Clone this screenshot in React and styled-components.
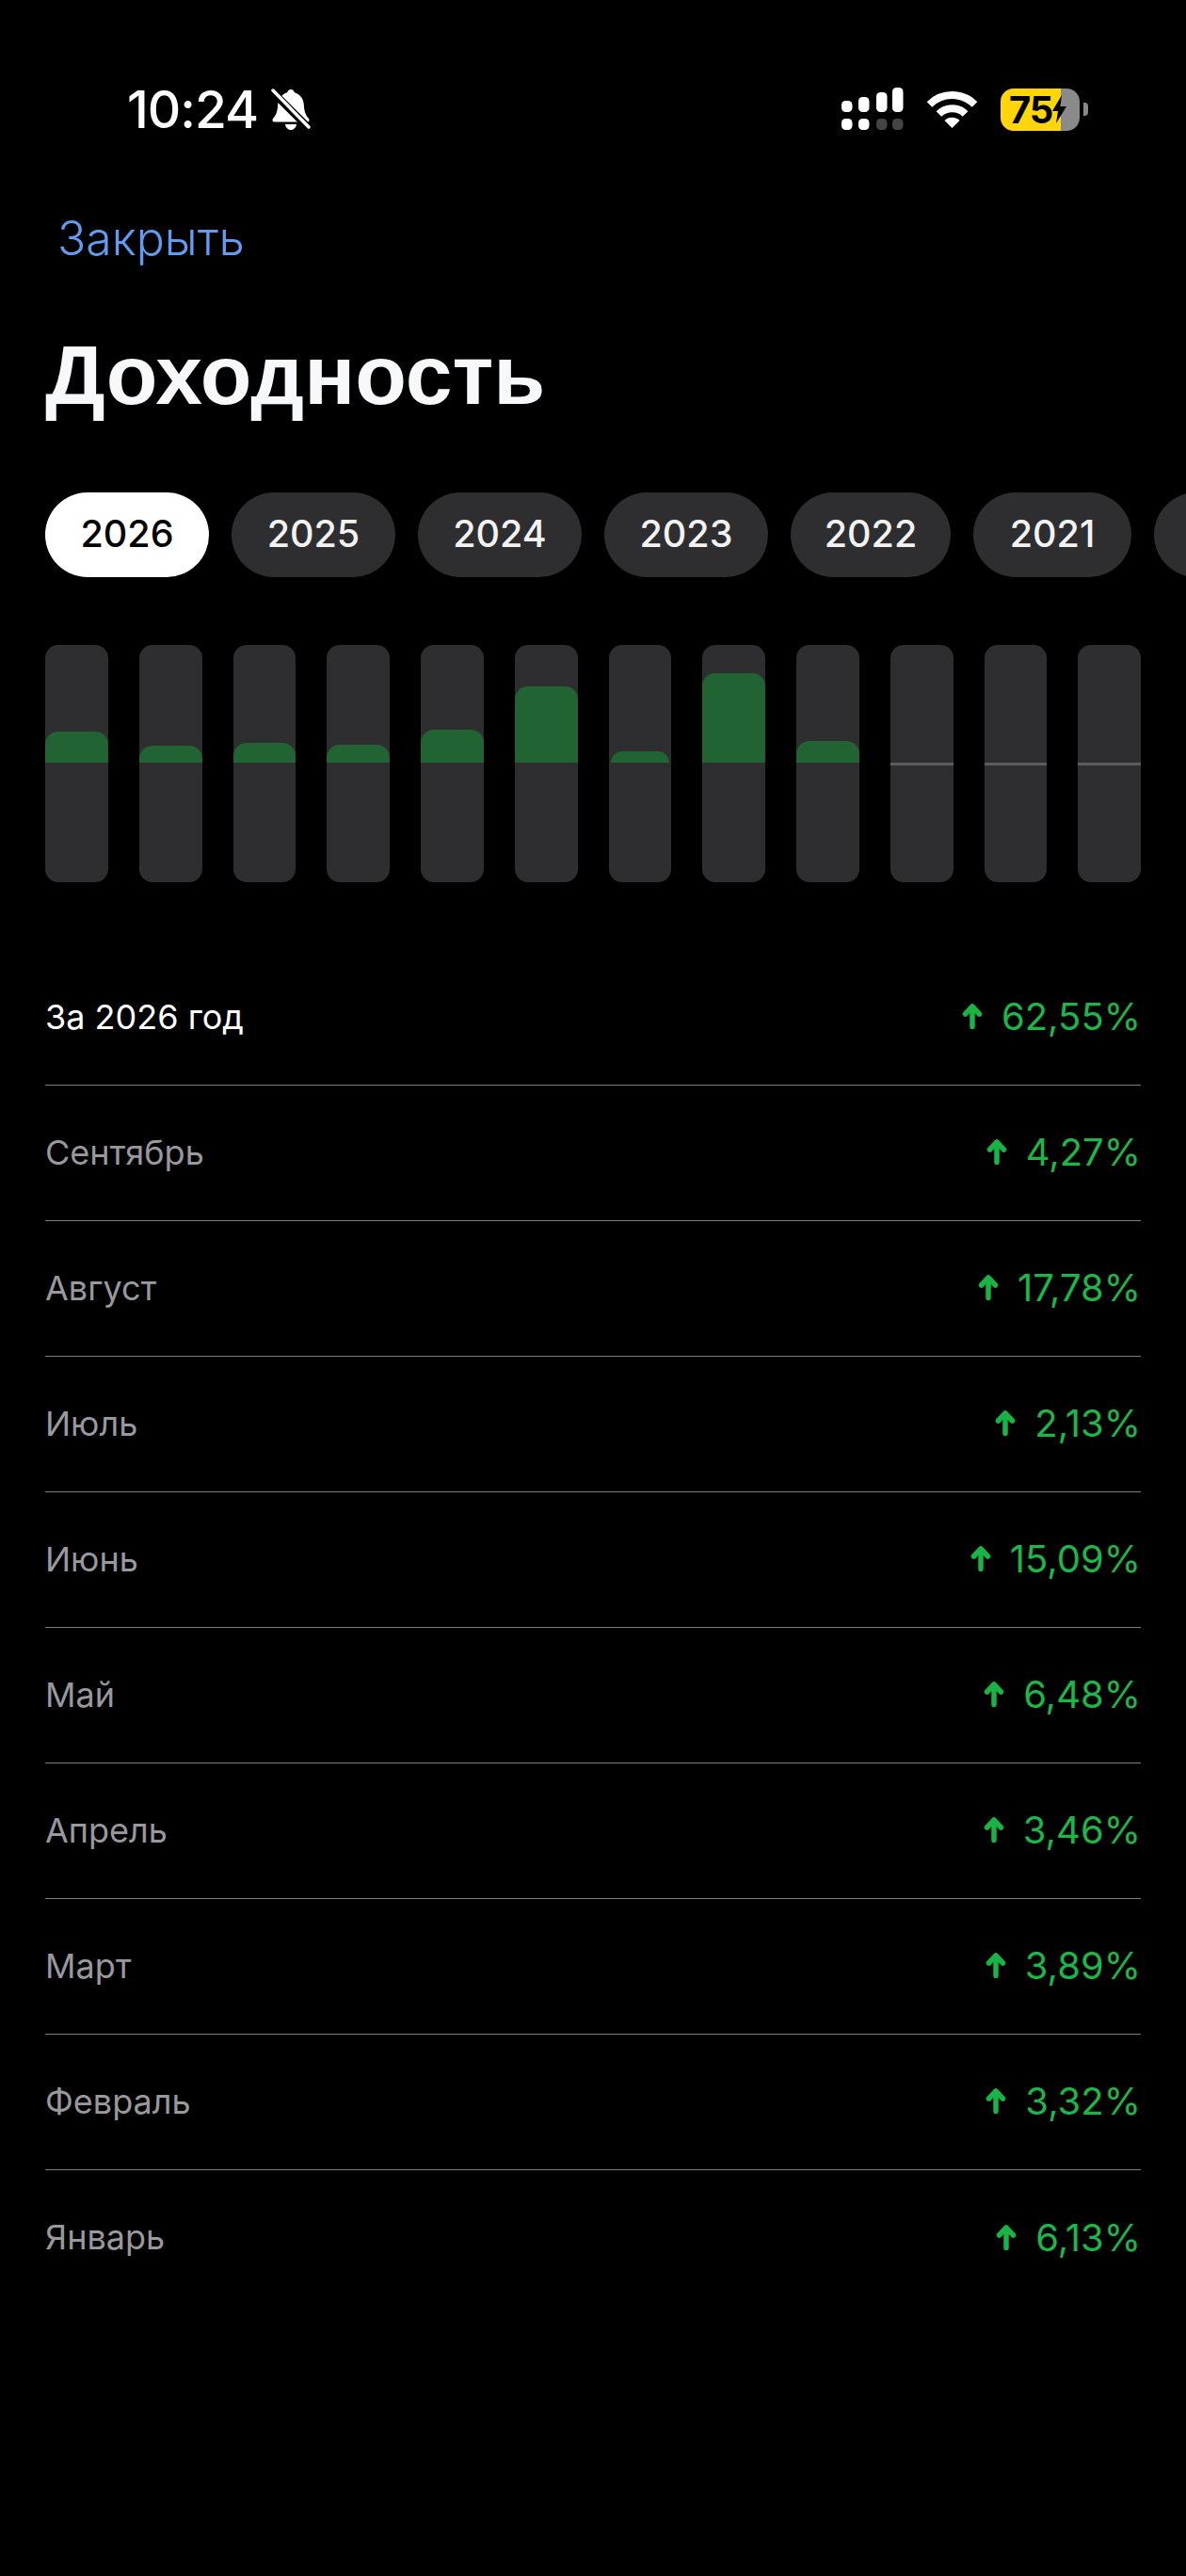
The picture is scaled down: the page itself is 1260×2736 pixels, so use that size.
import React from 'react';
import styled, { createGlobalStyle } from 'styled-components';

const years = [
  ['2026', 174],
  ['2025', 174],
  ['2024', 174],
  ['2023', 174],
  ['2022', 170],
  ['2021', 168],
];
const bars = [33, 18, 21, 19, 35, 81, 12, 95, 23, 0, 0, 0];
const months = [
  ['Сентябрь', '4,27%'],
  ['Август', '17,78%'],
  ['Июль', '2,13%'],
  ['Июнь', '15,09%'],
  ['Май', '6,48%'],
  ['Апрель', '3,46%'],
  ['Март', '3,89%'],
  ['Февраль', '3,32%'],
  ['Январь', '6,13%'],
];

const Global = createGlobalStyle`
  html, body { margin: 0; padding: 0; background: #000; }
`;

const Screen = styled.div`
  width: 1260px;
  height: 2736px;
  overflow: hidden;
  background: #000;
  color: #fff;
  font-family: Inter, "Liberation Sans", sans-serif;
`;

const StatusBar = styled.div`
  height: 92px;
  padding: 70px 104px 0 135px;
  display: flex;
  align-items: center;
  justify-content: space-between;
`;

const TimeGroup = styled.div`
  display: flex;
  align-items: center;
  gap: 14px;
`;

const Time = styled.span`
  font-size: 55px;
  font-weight: 500;
  letter-spacing: -1px;
`;

const Indicators = styled.div`
  display: flex;
  align-items: center;
  gap: 23px;
`;

const Battery = styled.div`
  display: flex;
  align-items: center;
  gap: 4px;
`;

const BatteryBody = styled.div`
  width: 84px;
  height: 45px;
  border-radius: 14px;
  background: linear-gradient(90deg, #ffd60a 0 64px, #8a8a8c 64px);
  display: flex;
  align-items: center;
  padding-left: 9px;
  box-sizing: border-box;
  color: #000;
  font-size: 40px;
  font-weight: 700;
  letter-spacing: -1px;
  svg {
    flex: none;
  }
`;

const BatteryNub = styled.div`
  width: 5px;
  height: 14px;
  border-radius: 0 4px 4px 0;
  background: #8a8a8c;
`;

const Close = styled.div`
  margin: 61px 0 0 61px;
  font-size: 50px;
  line-height: 60px;
  font-weight: 300;
  color: #5f9cf2;
`;

const Title = styled.h1`
  margin: 65px 0 0 48px;
  font-family: "Liberation Sans", Arial, sans-serif;
  font-size: 89.5px;
  line-height: 100px;
  font-weight: 700;
  color: #f7f8fa;
`;

const Years = styled.div`
  margin-top: 75px;
  padding-left: 48px;
  display: flex;
  gap: 24px;
`;

const YearPill = styled.div`
  flex: none;
  width: ${(p) => p.$width}px;
  height: 90px;
  padding-bottom: 2px;
  box-sizing: border-box;
  border-radius: 45px;
  display: flex;
  align-items: center;
  justify-content: center;
  font-size: 39.5px;
  font-weight: 500;
  background: ${(p) => (p.$active ? '#fff' : '#2e2e30')};
  color: ${(p) => (p.$active ? '#000' : '#f2f2f2')};
`;

const Chart = styled.div`
  margin: 72px 48px 0;
  display: grid;
  grid-template-columns: repeat(12, 1fr);
  column-gap: 33px;
`;

const Track = styled.div`
  height: 252px;
  border-radius: 14px;
  overflow: hidden;
  background: #2e2e30;
`;

const TrackTop = styled.div`
  height: 125px;
  display: flex;
  align-items: flex-end;
`;

const Fill = styled.div`
  flex: 1;
  margin: 0 ${(p) => (p.$small ? '2px' : '0')};
  border-radius: 14px 14px 0 0;
  background: #216332;
`;

const ZeroLine = styled.div`
  height: 3px;
  background: #5c5c5e;
`;

const List = styled.div`
  margin: 72px 48px 0;
`;

const Row = styled.div`
  height: 144px;
  padding-bottom: 2px;
  box-sizing: border-box;
  display: flex;
  align-items: center;
  justify-content: space-between;
  border-bottom: ${(p) => (p.$last ? 'none' : '1px solid #7d7d7d')};
`;

const Label = styled.span`
  font-size: 36px;
  color: ${(p) => (p.$total ? '#fff' : '#98989d')};
`;

const Change = styled.span`
  display: flex;
  align-items: center;
  gap: 20px;
  font-size: 40px;
  color: #1db64a;
`;

function BellSlash() {
  return (
    <svg width="42" height="45" viewBox="0 0 42 45">
      <path
        fill="#fff"
        d="M21 1c2 0 3.4 1.4 3.8 3.2C31 6 34.400 11 34.800 17c.4 7 1.700 11 5.200 15 1.200 1.500.4 3.500-1.700 3.500H3.700C1.600 35.500.8 33.500 2 32c3.500-4 4.800-8 5.200-15C7.600 11 11 6 17.200 4.200 17.600 2.400 19 1 21 1z"
      />
      <path fill="#fff" d="M15 38h12c-.5 3.500-3 6-6 6s-5.500-2.500-6-6z" />
      <path stroke="#000" strokeWidth="8" d="M0 2l42 42" />
      <path stroke="#fff" strokeWidth="3.500" strokeLinecap="round" d="M2 2l38 39" />
    </svg>
  );
}

function SignalIcon() {
  const cols = [
    [35, 36],
    [53, 32],
    [72, 27],
    [89, 22],
  ];
  return (
    <svg width="66" height="46" viewBox="35 22 66 46">
      {cols.map(([x, top], i) => (
        <g key={x}>
          <rect x={x} y={top} width="11.500" height={48 - top} rx="4.500" fill="#fff" />
          <rect x={x} y="55" width="11.500" height="12" rx="4.500" fill={i < 2 ? '#fff' : '#444446'} />
        </g>
      ))}
    </svg>
  );
}

function WifiIcon() {
  return (
    <svg width="57" height="42" viewBox="0 0 57 42">
      <g fill="none" stroke="#fff" strokeWidth="8">
        <path d="M4.500 16a34 34 0 0 1 48 0" />
        <path d="M14.400 26a20 20 0 0 1 28.200 0" />
      </g>
      <path fill="#fff" d="M28.500 41L20.500 33a11.300 11.300 0 0 1 16 0z" />
    </svg>
  );
}

function Bolt() {
  return (
    <svg width="15" height="30" viewBox="0 0 15 30">
      <path fill="#000" d="M10 0L0 17h6L4 30l11-18H8.500z" />
    </svg>
  );
}

function UpArrow() {
  return (
    <svg width="22" height="27" viewBox="0 0 22 27">
      <path
        fill="none"
        stroke="#19b346"
        strokeWidth="5.500"
        strokeLinecap="round"
        strokeLinejoin="round"
        d="M11 24.500V3M3.500 11L11 3l7.500 8"
      />
    </svg>
  );
}

export default function App() {
  return (
    <Screen>
      <Global />
      <StatusBar>
        <TimeGroup>
          <Time>10:24</Time>
          <BellSlash />
        </TimeGroup>
        <Indicators>
          <SignalIcon />
          <WifiIcon />
          <Battery>
            <BatteryBody>
              75
              <Bolt />
            </BatteryBody>
            <BatteryNub />
          </Battery>
        </Indicators>
      </StatusBar>
      <Close>Закрыть</Close>
      <Title>Доходность</Title>
      <Years>
        {years.map(([y, w], i) => (
          <YearPill key={y} $width={w} $active={i === 0}>
            {y}
          </YearPill>
        ))}
        <YearPill $width={174} />
      </Years>
      <Chart>
        {bars.map((h, i) => (
          <Track key={i}>
            <TrackTop>{h > 0 && <Fill $small={h < 15} style={{ height: h }} />}</TrackTop>
            {h === 0 && <ZeroLine />}
          </Track>
        ))}
      </Chart>
      <List>
        <Row>
          <Label $total>За 2026 год</Label>
          <Change>
            <UpArrow />
            62,55%
          </Change>
        </Row>
        {months.map(([name, value], i) => (
          <Row key={name} $last={i === months.length - 1}>
            <Label>{name}</Label>
            <Change>
              <UpArrow />
              {value}
            </Change>
          </Row>
        ))}
      </List>
    </Screen>
  );
}
